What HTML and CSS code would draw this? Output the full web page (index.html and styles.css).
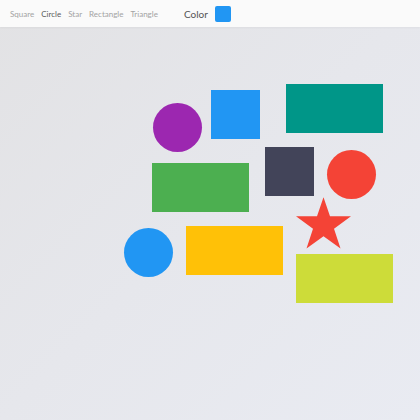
FILE: index.html
```html
<!DOCTYPE html>
<html>
<head>
<meta charset="utf-8">
<link rel="stylesheet" href="styles.css">
</head>
<body>
<header class="toolbar">
  <nav class="tools">
    <span class="tool">Square</span>
    <span class="tool active">Circle</span>
    <span class="tool">Star</span>
    <span class="tool">Rectangle</span>
    <span class="tool">Triangle</span>
  </nav>
  <div class="color-pick">
    <span class="color-label">Color</span>
    <span class="swatch"></span>
  </div>
</header>
<main class="canvas">
  <div class="shape circle purple" style="left:153px;top:76px"></div>
  <div class="shape square blue" style="left:211px;top:63px"></div>
  <div class="shape rect teal" style="left:286px;top:57px"></div>
  <div class="shape square slate" style="left:265px;top:120px"></div>
  <div class="shape circle red" style="left:327px;top:123px"></div>
  <div class="shape rect green" style="left:152px;top:136px"></div>
  <svg class="shape star" style="left:294px;top:168px" width="60" height="56" viewBox="0 0 60 56">
    <polygon fill="#f44336" points="29.5,2.3 36,21.3 57,21.3 40,33.7 46.5,53.5 29.5,41.3 12.5,53.5 19,33.7 2,21.3 23,21.3"/>
  </svg>
  <div class="shape circle blue" style="left:124px;top:201px"></div>
  <div class="shape rect amber" style="left:186px;top:199px"></div>
  <div class="shape rect lime" style="left:296px;top:227px"></div>
</main>
</body>
</html>
```
FILE: styles.css
```css
html, body {
  margin: 0;
  padding: 0;
  height: 100%;
}
body {
  font-family: Lato, "Open Sans", sans-serif;
  background: linear-gradient(135deg, #e2e2e4 0%, #e6e7ec 50%, #e9ebf2 100%);
  display: flex;
  flex-direction: column;
}
.toolbar {
  height: 27px;
  background: #fafafa;
  display: flex;
  align-items: center;
  padding-left: 10px;
  box-shadow: 0 1px 2px rgba(0,0,0,0.04);
  flex-shrink: 0;
}
.tools {
  display: flex;
  gap: 7px;
}
.tool {
  font-size: 8px;
  color: #a3a3a3;
}
.tool.active {
  color: #5a5a5a;
}
.color-pick {
  display: flex;
  align-items: center;
  gap: 7px;
  margin-left: 26px;
}
.color-label {
  font-size: 10px;
  color: #555;
}
.swatch {
  width: 16px;
  height: 16px;
  border-radius: 2px;
  background: #2196f3;
}
.canvas {
  position: relative;
  flex: 1;
}
.shape {
  position: absolute;
  box-sizing: border-box;
}
.circle {
  width: 49px;
  height: 49px;
  border-radius: 50%;
}
.square {
  width: 49px;
  height: 49px;
}
.rect {
  width: 97px;
  height: 49px;
}
.star { overflow: visible; }
.purple { background: #9c27b0; }
.blue { background: #2196f3; }
.teal { background: #009688; }
.slate { background: #424459; }
.red { background: #f44336; }
.green { background: #4caf50; }
.amber { background: #ffc107; }
.lime { background: #cddc39; }
```
